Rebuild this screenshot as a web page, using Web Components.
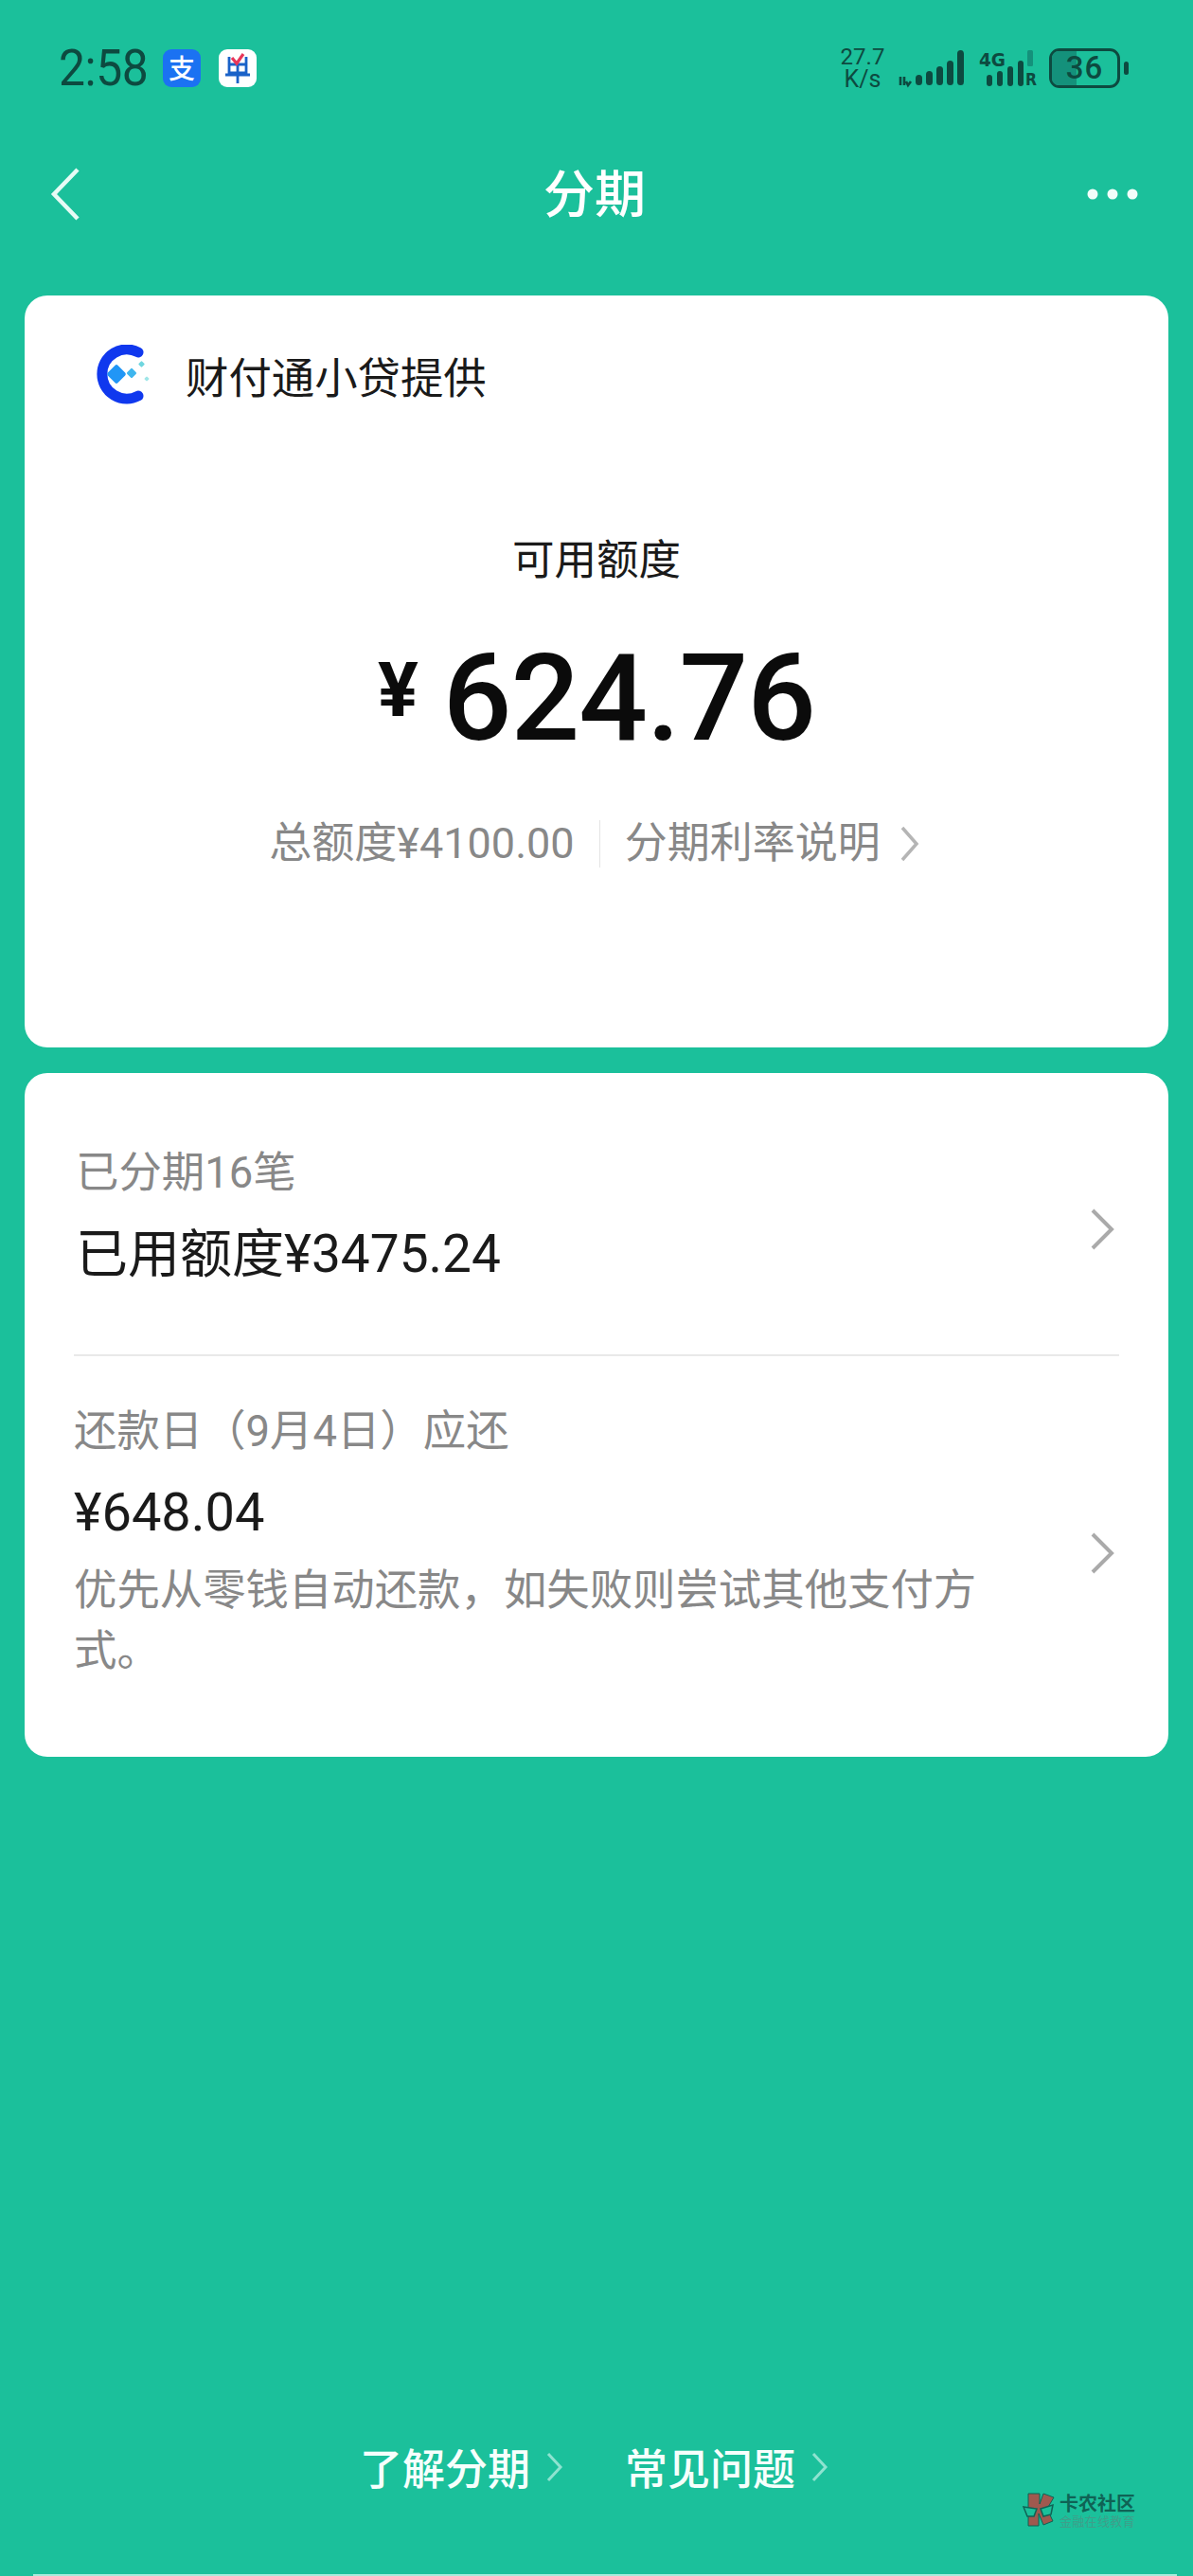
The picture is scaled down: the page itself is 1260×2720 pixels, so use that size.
<!DOCTYPE html>
<html lang="zh">
<head>
<meta charset="utf-8">
<title>分期</title>
<style>
  html, body { margin: 0; padding: 0; }
  body { font-family: Roboto, "Noto Sans CJK SC", sans-serif; background: #1bc09b; }
</style>
</head>
<body>
<loan-page>
  <status-bar slot="status"></status-bar>
  <nav-bar slot="nav">分期</nav-bar>
  <credit-card slot="cards"></credit-card>
  <repay-card slot="cards">
    <repay-row>
      <span slot="title">已分期16笔</span>
      <span slot="value">已用额度¥3475.24</span>
    </repay-row>
    <repay-row variant="due">
      <span slot="title">还款日（9月4日）应还</span>
      <span slot="value">¥648.04</span>
      <span slot="desc">优先从零钱自动还款，如失败则尝试其他支付方式。</span>
    </repay-row>
  </repay-card>
  <foot-links slot="foot"></foot-links>
  <kanong-mark slot="mark"></kanong-mark>
</loan-page>

<script>
class LoanPage extends HTMLElement {
  connectedCallback() {
    this.attachShadow({ mode: 'open' });
    this.shadowRoot.innerHTML = `
      <style>
        :host { display: flex; flex-direction: column; position: relative; height: 2720px; overflow: hidden; }
        .cards { display: flex; flex-direction: column; gap: 27px; margin: 46px 26px 0; }
        .foot { margin-top: auto; }
        .home { height: 2px; margin: 0 17px 0 35px; background: #a8ecdc; }
      </style>
      <slot name="status"></slot>
      <slot name="nav"></slot>
      <div class="cards"><slot name="cards"></slot></div>
      <div class="foot"><slot name="foot"></slot></div>
      <div class="home"></div>
      <slot name="mark"></slot>
    `;
  }
}

class StatusBar extends HTMLElement {
  connectedCallback() {
    this.attachShadow({ mode: 'open' });
    this.shadowRoot.innerHTML = `
      <style>
        :host { display: flex; align-items: center; height: 144px; padding: 0 68px 0 62px; color: #0d4a40; font-family: Roboto, sans-serif; }
        .time { font-size: 53px; line-height: 56px; width: 110px; letter-spacing: -.5px; white-space: nowrap; transform: scaleX(.94); transform-origin: left center; }
        .app { width: 40px; height: 40px; border-radius: 9px; display: block; }
        .apps { display: flex; gap: 19px; }
        .right { margin-left: auto; display: flex; align-items: center; }
        .speed { width: 56px; font-size: 24px; line-height: 23px; text-align: center; margin-top: -1px; }
        .speed div + div { font-size: 25px; }
        svg { display: block; overflow: visible; }
        svg text { font-family: "DejaVu Sans", Roboto, sans-serif; font-weight: 700; fill: #0d4a40; }
        .sig { margin-left: 8px; }
        .batt { position: relative; width: 75px; height: 42px; box-sizing: border-box; margin-left: 12px; border: 3.5px solid #0d4a40; border-radius: 11px; font-size: 33px; line-height: 35px; text-align: center; letter-spacing: 1px; font-weight: 500; }
        .batt i { position: absolute; left: 0; top: 0; bottom: 0; width: 26px; background: #14917b; border-radius: 7px 0 0 7px; }
        .batt span { position: relative; }
        .nub { width: 5px; height: 14px; border-radius: 2.5px; background: #0d4a40; margin-left: 4px; }
      </style>
      <div class="time">2:58</div>
      <div class="apps">
        <svg class="app" viewBox="0 0 40 40" style="background:#1b72f2">
          <text x="20" y="31" text-anchor="middle" font-size="28" style="font-family:'Noto Sans CJK SC',sans-serif;font-weight:500;fill:#fff">支</text>
        </svg>
        <svg class="app" viewBox="0 0 40 40" style="background:#fff">
          <path d="M11 8 V25 H29 V8 M11 16 H29 M7 27 H33 M20 16 V36" fill="none" stroke="#1a62c8" stroke-width="2.8"/>
          <path d="M14 9 L19 15 L26 5" fill="none" stroke="#e8365a" stroke-width="3.2"/>
        </svg>
      </div>
      <div class="right">
        <div class="speed"><div>27.7</div><div>K/s</div></div>
        <svg class="sig" width="72" height="42" viewBox="0 0 72 42">
          <path d="M4 30 V39 M8 30 V39 M10 35 L12 39 L15 35" fill="none" stroke="#0d4a40" stroke-width="2.6"/>
          <rect x="20" y="28" width="7" height="11" rx="3.5" fill="#0d4a40"/>
          <rect x="31" y="24" width="7" height="15" rx="3.5" fill="#0d4a40"/>
          <rect x="42" y="19" width="7" height="20" rx="3.5" fill="#0d4a40"/>
          <rect x="53" y="13" width="7" height="26" rx="3.5" fill="#0d4a40"/>
          <rect x="64" y="2" width="7" height="37" rx="3.5" fill="#0d4a40"/>
        </svg>
        <svg class="sig" style="margin-left:15px" width="62" height="42" viewBox="0 0 62 42">
          <text x="0" y="19" font-size="20" textLength="28" lengthAdjust="spacingAndGlyphs">4G</text>
          <rect x="8" y="28" width="6" height="12" rx="3" fill="#0d4a40"/>
          <rect x="19" y="24" width="6" height="16" rx="3" fill="#0d4a40"/>
          <rect x="30" y="19" width="6" height="21" rx="3" fill="#0d4a40"/>
          <rect x="41" y="13" width="6" height="27" rx="3" fill="#0d4a40"/>
          <rect x="51" y="2" width="6" height="17" rx="1.5" fill="#14917b"/>
          <text x="49" y="39" font-size="17" textLength="12" lengthAdjust="spacingAndGlyphs">R</text>
        </svg>
        <div class="batt"><i></i><span>36</span></div>
        <div class="nub"></div>
      </div>
    `;
  }
}

class NavBar extends HTMLElement {
  connectedCallback() {
    this.attachShadow({ mode: 'open' });
    this.shadowRoot.innerHTML = `
      <style>
        :host { display: grid; grid-template-columns: 1fr auto 1fr; align-items: center; height: 122px; padding: 0 58px 0 52px; color: #fff; }
        .title { font: 500 54px/62px "Noto Sans CJK SC", sans-serif; margin: -6px 0 0 2px; }
        svg { display: block; }
        .more { justify-self: end; }
      </style>
      <svg width="34" height="58" viewBox="0 0 34 58"><path d="M30 3 L5 29 L30 55" fill="none" stroke="#e6fbf5" stroke-width="4.5"/></svg>
      <div class="title"><slot></slot></div>
      <svg class="more" width="54" height="12" viewBox="0 0 54 12" fill="#f2fdfa"><circle cx="6" cy="6" r="5.5"/><circle cx="27" cy="6" r="5.5"/><circle cx="48" cy="6" r="5.5"/></svg>
    `;
  }
}

class CreditCard extends HTMLElement {
  connectedCallback() {
    this.attachShadow({ mode: 'open' });
    this.shadowRoot.innerHTML = `
      <style>
        :host { display: block; box-sizing: border-box; height: 794px; background: #fff; border-radius: 24px; padding-top: 53px; color: #1a1a1a; font-family: Roboto, "Noto Sans CJK SC", sans-serif; }
        .provider { display: flex; align-items: center; gap: 30px; padding-left: 74px; height: 62px; font: 400 45.4px/62px "Noto Sans CJK SC", sans-serif; }
        .label { text-align: center; margin-top: 131px; font: 400 44.5px/60px "Noto Sans CJK SC", sans-serif; }
        .amount { display: flex; justify-content: center; align-items: center; gap: 26px; height: 150px; margin-top: 44px; color: #0b0b0b; }
        .yen { font: 700 80px/150px Roboto, sans-serif; margin-top: -16px; }
        .num { font: 500 128px/150px Roboto, sans-serif; letter-spacing: -1px; }
        .meta { display: flex; justify-content: center; align-items: center; height: 60px; margin: 49px 4px 0 0; color: #888; font-size: 45px; line-height: 60px; }
        .sep { width: 1px; height: 50px; background: #e4e4e4; margin: 0 26px; }
        .meta svg { margin-left: 20px; display: block; }
      </style>
      <div class="provider">
        <svg width="66" height="64" viewBox="0 0 66 64">
          <path d="M46 8 A26 26 0 1 0 46 54" fill="none" stroke="#1038ee" stroke-width="11" stroke-linecap="round"/>
          <rect x="15.5" y="23.5" width="15" height="15" rx="2" transform="rotate(45 23 31)" fill="#2196f6" />
          <rect x="35" y="26" width="8" height="8" rx="1.5" transform="rotate(45 39 30)" fill="#3fb6ee"/>
          <rect x="47" y="18" width="5" height="5" rx="1" transform="rotate(45 49.5 20.5)" fill="#6fd6df"/>
          <rect x="53" y="34" width="4" height="4" rx="1" transform="rotate(45 55 36)" fill="#9fe6e8"/>
        </svg>
        <span>财付通小贷提供</span>
      </div>
      <div class="label">可用额度</div>
      <div class="amount"><span class="yen">¥</span><span class="num">624.76</span></div>
      <div class="meta">
        <span>总额度¥4100.00</span>
        <span class="sep"></span>
        <span>分期利率说明</span>
        <svg width="22" height="40" viewBox="0 0 22 40"><path d="M3 3 L18 20 L3 37" fill="none" stroke="#b5b5b5" stroke-width="3.5"/></svg>
      </div>
    `;
  }
}

class RepayCard extends HTMLElement {
  connectedCallback() {
    this.attachShadow({ mode: 'open' });
    this.shadowRoot.innerHTML = `
      <style>
        :host { display: block; background: #fff; border-radius: 24px; padding: 0 52px; height: 722px; box-sizing: border-box; }
      </style>
      <slot></slot>
    `;
  }
}

class RepayRow extends HTMLElement {
  connectedCallback() {
    const due = this.getAttribute('variant') === 'due';
    this.attachShadow({ mode: 'open' });
    this.shadowRoot.innerHTML = `
      <style>
        :host { display: flex; align-items: flex-start; justify-content: space-between; box-sizing: border-box; font-family: Roboto, "Noto Sans CJK SC", sans-serif; }
        :host(:not([variant])) { height: 299px; padding: 75px 0 0 2px; border-bottom: 2px solid #e9e9e9; }
        :host([variant="due"]) { height: 423px; padding-top: 49px; }
        .body { width: 960px; }
        .title { color: #888; font-size: 45.4px; line-height: 62px; }
        .value { color: #1a1a1a; font-size: ${due ? 56 : 55}px; line-height: ${due ? 70 : 76}px; margin-top: ${due ? 19 : 16}px; }
        .desc { color: #888; font-size: 45.4px; line-height: 64px; margin-top: 16px; }
        svg { display: block; margin-right: 4px; margin-top: ${due ? 136 : 67}px; }
      </style>
      <div class="body">
        <div class="title"><slot name="title"></slot></div>
        <div class="value"><slot name="value"></slot></div>
        ${due ? '<div class="desc"><slot name="desc"></slot></div>' : ''}
      </div>
      <svg width="28" height="46" viewBox="0 0 28 46"><path d="M4 3 L24 23 L4 43" fill="none" stroke="#aaa" stroke-width="4"/></svg>
    `;
  }
}

class FootLinks extends HTMLElement {
  connectedCallback() {
    this.attachShadow({ mode: 'open' });
    this.shadowRoot.innerHTML = `
      <style>
        :host { display: flex; justify-content: center; gap: 64px; padding: 0 4px 82px 0; color: #f6fffc; font: 500 45px/62px "Noto Sans CJK SC", sans-serif; }
        a { display: flex; align-items: center; gap: 16px; }
        svg { display: block; }
      </style>
      <a>了解分期<svg width="20" height="34" viewBox="0 0 20 34"><path d="M3 3 L16 17 L3 31" fill="none" stroke="#8ee3d0" stroke-width="3"/></svg></a>
      <a>常见问题<svg width="20" height="34" viewBox="0 0 20 34"><path d="M3 3 L16 17 L3 31" fill="none" stroke="#8ee3d0" stroke-width="3"/></svg></a>
    `;
  }
}

// watermark sits over the page, bottom right
class KanongMark extends HTMLElement {
  connectedCallback() {
    this.attachShadow({ mode: 'open' });
    this.shadowRoot.innerHTML = `
      <style>
        :host { position: absolute; left: 1080px; top: 2632px; display: flex; gap: 3px; font-family: "Noto Sans CJK SC", sans-serif; }
        svg { display: block; }
        .a { color: #0f6355; font-size: 20px; line-height: 22px; font-weight: 700; white-space: nowrap; }
        .b { color: #3f9e8a; font-size: 13px; line-height: 16px; letter-spacing: .3px; white-space: nowrap; }
      </style>
      <svg width="36" height="36" viewBox="0 0 36 36">
        <path d="M6 1 H18 V12 L22 1 L33 5 L26 17 L32 30 L22 34 L17 22 V35 H6 Z" fill="#a0594f" stroke="#0f6355" stroke-width="1"/>
        <path d="M1 15 L15 17 L12 25 H5 Z M19 17 L32 13 L30 23 L22 25 Z" fill="#1bc09b" stroke="#0f6355" stroke-width="1.5"/>
      </svg>
      <div><div class="a">卡农社区</div><div class="b">金融在线教育</div></div>
    `;
  }
}

customElements.define('loan-page', LoanPage);
customElements.define('status-bar', StatusBar);
customElements.define('nav-bar', NavBar);
customElements.define('credit-card', CreditCard);
customElements.define('repay-card', RepayCard);
customElements.define('repay-row', RepayRow);
customElements.define('foot-links', FootLinks);
customElements.define('kanong-mark', KanongMark);
</script>
</body>
</html>
